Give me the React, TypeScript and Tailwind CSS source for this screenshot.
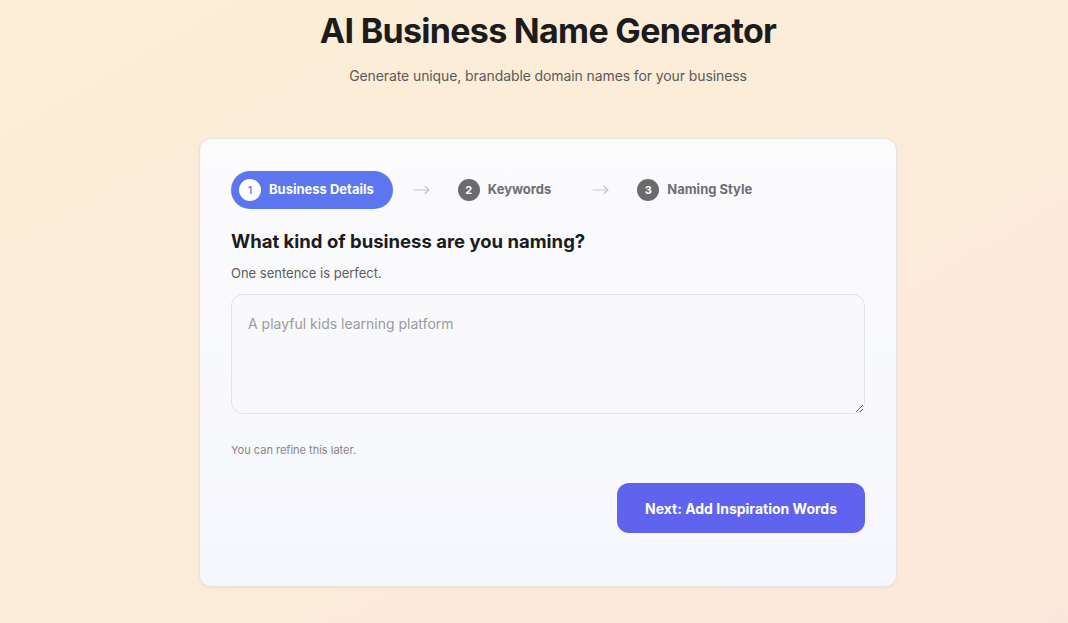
import React, { useState } from 'react';

const steps = [
  { n: 1, label: 'Business Details' },
  { n: 2, label: 'Keywords' },
  { n: 3, label: 'Naming Style' },
];

const Arrow: React.FC = () => (
  <svg width="18" height="10" viewBox="0 0 18 10" fill="none" className="text-[#c4c4cc]">
    <path d="M1 5h15M12 1.5 16 5l-4 3.5" stroke="currentColor" strokeWidth="1.2" strokeLinecap="round" strokeLinejoin="round" />
  </svg>
);

const App: React.FC = () => {
  const [description, setDescription] = useState('');
  const active = 1;

  return (
    <div
      className="min-h-screen w-full bg-gradient-to-br from-[#fbefd6] via-[#fbecd9] to-[#fbe8dc] pl-[28px]"
      style={{ fontFamily: 'Inter, "Noto Sans", sans-serif' }}
    >
      <div className="mx-auto flex w-[698px] flex-col items-center">
        {/* Header */}
        <h1 className="mt-[11px] text-[34px] font-bold leading-[40px] tracking-[-0.7px] text-[#1c1c1c]">
          AI Business Name Generator
        </h1>
        <p className="mt-[15px] text-[14px] leading-[20px] tracking-[-0.1px] text-[#5a5a5a]">
          Generate unique, brandable domain names for your business
        </p>

        {/* Card */}
        <div className="mt-[52px] w-full rounded-[12px] border border-[#e6e3e3] bg-gradient-to-b from-[#fbfbfc] to-[#f6f7fd] px-[31px] pb-[53px] pt-[32px] shadow-[0_1px_3px_rgba(0,0,0,0.05)]">
          {/* Steps */}
          <div className="flex items-center">
            {steps.map((step, i) => (
              <React.Fragment key={step.n}>
                {step.n === active ? (
                  <div className="flex h-[38px] items-center gap-[8px] rounded-full bg-[#5b76ee] pl-[8px] pr-[19px]">
                    <span className="flex h-[22px] w-[22px] items-center justify-center rounded-full bg-white text-[11px] font-medium text-[#5b76ee]">
                      {step.n}
                    </span>
                    <span className="text-[13px] font-bold text-white">{step.label}</span>
                  </div>
                ) : (
                  <div className="flex h-[38px] items-center gap-[8px]">
                    <span className="flex h-[22px] w-[22px] items-center justify-center rounded-full bg-[#6b6b6e] text-[11px] font-bold text-white">
                      {step.n}
                    </span>
                    <span className="text-[13px] font-bold text-[#6e6e72]">{step.label}</span>
                  </div>
                )}
                {i < steps.length - 1 && (
                  <div className={i === 0 ? 'ml-[20px] mr-[27px] flex items-center' : 'ml-[41px] mr-[27px] flex items-center'}>
                    <Arrow />
                  </div>
                )}
              </React.Fragment>
            ))}
          </div>

          {/* Question */}
          <h2 className="mt-[19px] text-[18.5px] font-bold leading-[26px] text-[#1c1c1e]">
            What kind of business are you naming?
          </h2>
          <p className="mt-[10px] text-[13px] leading-[18px] text-[#5c5c60]">One sentence is perfect.</p>

          <textarea
            value={description}
            onChange={(e) => setDescription(e.target.value)}
            placeholder="A playful kids learning platform"
            className="mt-[12px] block h-[120px] w-full resize-y rounded-[12px] border border-[#e2e2ea] bg-[#f9f9fc] px-[16px] py-[19px] text-[14px] leading-[20px] text-[#333] placeholder:text-[#9a9aa0] focus:outline-none"
          />

          <p className="mt-[28px] text-[11px] leading-[16px] text-[#85858a]">You can refine this later.</p>

          <div className="mt-[25px] flex justify-end">
            <button className="h-[50px] w-[248px] rounded-[12px] bg-[#6063ee] text-[14px] font-bold text-white">
              Next: Add Inspiration Words
            </button>
          </div>
        </div>
      </div>
    </div>
  );
};

export default App;
